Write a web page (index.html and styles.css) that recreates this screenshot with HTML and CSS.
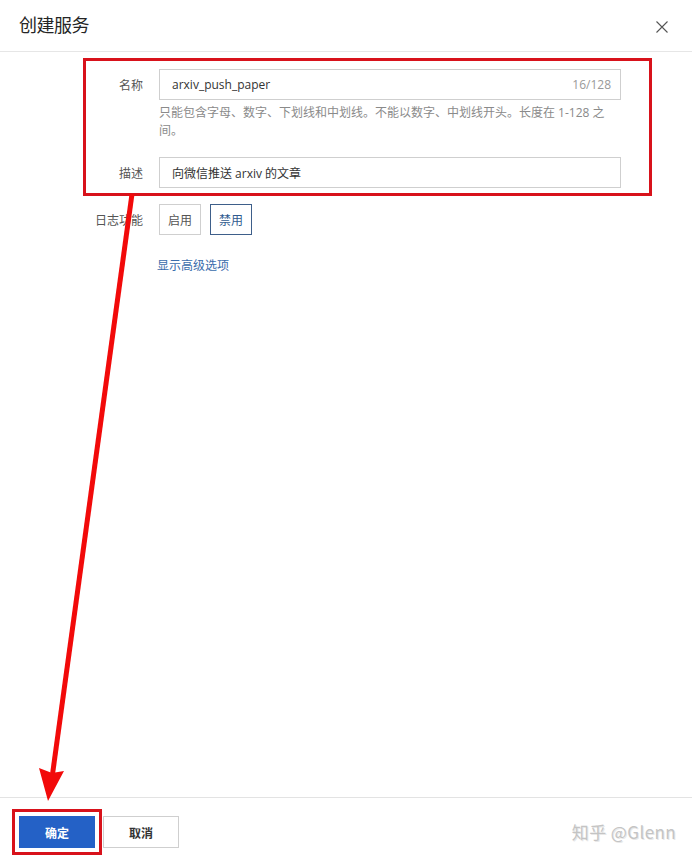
FILE: index.html
```html
<!DOCTYPE html>
<html lang="zh">
<head>
<meta charset="utf-8">
<title>创建服务</title>
<link rel="stylesheet" href="styles.css">
</head>
<body>
<div class="dialog">
  <header class="dialog-head">
    <h1 class="title">创建服务</h1>
    <span class="close" aria-label="close">
      <svg width="12" height="12" viewBox="0 0 12 12"><path d="M0.5 0.5 L11.5 11.5 M11.5 0.5 L0.5 11.5" stroke="#555" stroke-width="1.1" fill="none"/></svg>
    </span>
  </header>
  <main class="dialog-body">
    <div class="form">
      <div class="highlight">
        <div class="row">
          <label class="label">名称</label>
          <div class="field">
            <div class="input"><span class="value">arxiv_push_paper</span><span class="count">16/128</span></div>
            <p class="hint">只能包含字母、数字、下划线和中划线。不能以数字、中划线开头。长度在 1-128 之间。</p>
          </div>
        </div>
        <div class="row row-desc">
          <label class="label">描述</label>
          <div class="field">
            <div class="input"><span class="value">向微信推送 arxiv 的文章</span></div>
          </div>
        </div>
      </div>
      <div class="row row-log">
        <label class="label label-mid">日志功能</label>
        <div class="toggle">
          <span class="tbtn">启用</span>
          <span class="tbtn tbtn-on">禁用</span>
        </div>
      </div>
      <div class="row row-adv">
        <span></span>
        <a class="adv">显示高级选项</a>
      </div>
    </div>
  </main>
  <footer class="dialog-foot">
    <span class="btn btn-primary">确定</span>
    <span class="btn btn-default">取消</span>
    <span class="watermark">知乎 @Glenn</span>
  </footer>
  <svg class="arrow" width="692" height="855" viewBox="0 0 692 855">
    <line x1="132" y1="194" x2="52" y2="778" stroke="#f20a0a" stroke-width="5"/>
    <polygon points="39,768 52,773 64,771 48,801" fill="#f20a0a"/>
  </svg>
</div>
</body>
</html>
```
FILE: styles.css
```css
* { box-sizing: border-box; }
html, body { margin: 0; padding: 0; background: #fff; }
body {
  font-family: "Open Sans", "Noto Sans CJK SC", sans-serif;
  font-size: 12px;
  color: #333;
}
.dialog {
  position: relative;
  width: 692px;
  height: 855px;
  display: flex;
  flex-direction: column;
  overflow: hidden;
}
.dialog-head {
  height: 52px;
  border-bottom: 1px solid #e6e6e6;
  display: flex;
  align-items: center;
  justify-content: space-between;
  padding: 0 24px 4px 19px;
}
.title {
  margin: 0;
  font-family: "Noto Sans CJK SC", sans-serif;
  font-weight: 400;
  font-size: 18px;
  color: #252525;
  letter-spacing: -0.5px;
}
.close { display: flex; margin-top: 6px; }
.dialog-body { flex: 1; }
.form {
  margin: 9px 0 0 86px;
  width: 563px;
}
.highlight {
  outline: 3px solid #d8121b;
  padding: 8px 0 5px;
}
.row {
  display: grid;
  grid-template-columns: 57px 462px;
  column-gap: 16px;
}
.label {
  text-align: right;
  color: #555;
  font-family: "Noto Sans CJK SC", sans-serif;
  line-height: 31px;
  height: 31px;
}
.input {
  height: 31px;
  border: 1px solid #cfcfcf;
  display: flex;
  align-items: center;
  justify-content: space-between;
  padding: 0 9px 0 12px;
}
.value { color: #333; }
.count { color: #999; }
.hint {
  margin: 4px 0 0;
  color: #8a8a8a;
  line-height: 18px;
  padding-right: 8px;
}
.row-desc { margin-top: 17px; }
.row-log { margin-top: 11px; }
.toggle { display: flex; gap: 9px; }
.tbtn {
  width: 42px;
  height: 31px;
  border: 1px solid #cfcfcf;
  display: flex;
  align-items: center;
  justify-content: center;
  color: #555;
  font-family: "Noto Sans CJK SC", sans-serif;
}
.tbtn-on {
  border-color: #3e5f8a;
  color: #2f5b8f;
}
.row-adv { margin-top: 21px; }
.adv {
  color: #3a6cab;
  line-height: 18px;
  margin-left: -2px;
  font-family: "Noto Sans CJK SC", sans-serif;
}
.dialog-foot {
  height: 58px;
  border-top: 1px solid #e3e3e3;
  display: flex;
  align-items: flex-start;
  padding: 18px 16px 0 19px;
  gap: 8px;
}
.btn {
  width: 76px;
  height: 32px;
  display: flex;
  align-items: center;
  justify-content: center;
  font-family: "Noto Sans CJK SC", sans-serif;
  font-weight: 700;
}
.btn-primary {
  background: #2461c6;
  color: #fff;
  outline: 3px solid #d8121b;
  outline-offset: 4px;
}
.btn-default {
  background: #fff;
  border: 1px solid #cfcfcf;
  color: #333;
}
.watermark {
  margin-left: auto;
  margin-top: 3px;
  font-family: "Noto Sans CJK SC", sans-serif;
  font-size: 17px;
  color: #c4c4c4;
  text-shadow: 1px 1px 0 #e8e8e8;
  letter-spacing: 0.4px;
}
.arrow {
  position: absolute;
  left: 0;
  top: 0;
  pointer-events: none;
}
```
